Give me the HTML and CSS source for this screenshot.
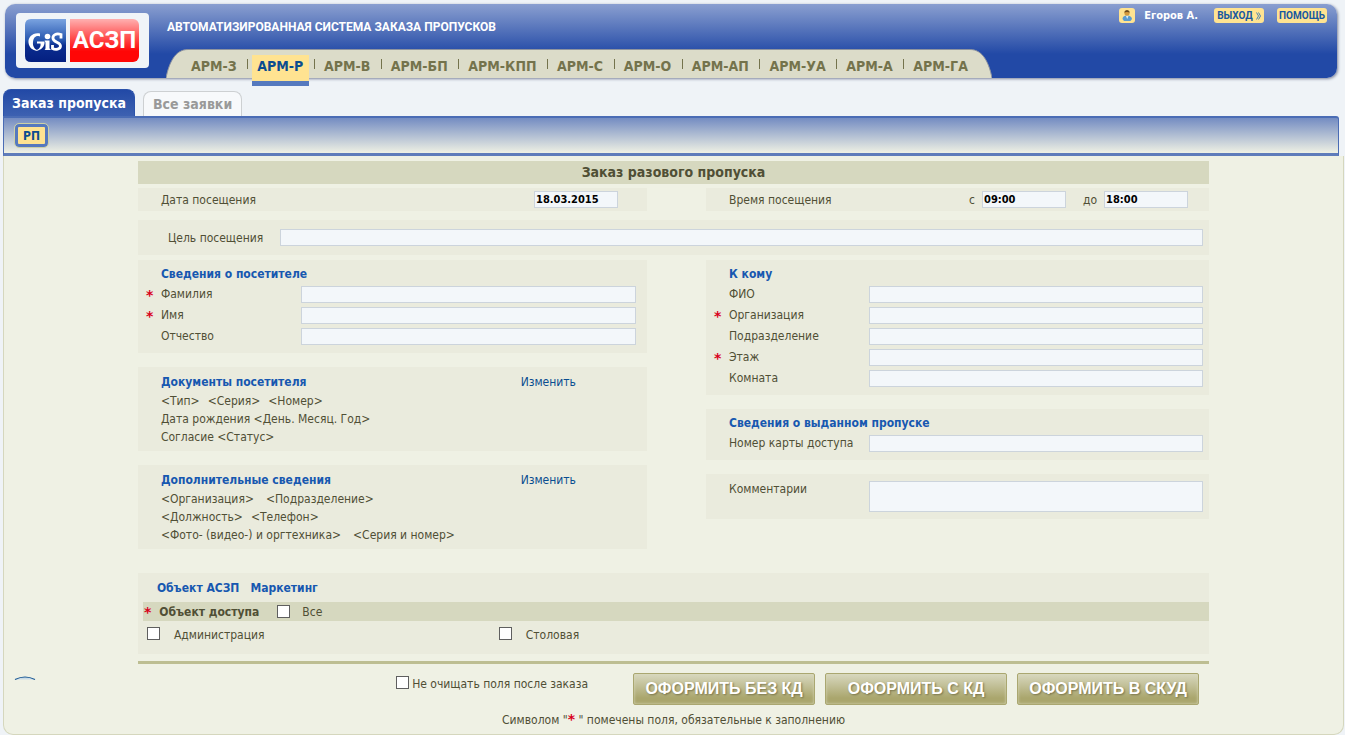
FILE: index.html
```html
<!DOCTYPE html>
<html lang="ru">
<head>
<meta charset="utf-8">
<title>АСЗП — Заказ разового пропуска</title>
<link rel="stylesheet" href="styles.css">
</head>
<body>
<header class="header">
  <div class="logo">
    <svg class="logo-mark" viewBox="0 0 41 43" role="img" aria-label="GiS">
      <defs><linearGradient id="gis" x1="0" y1="0" x2="0" y2="1"><stop offset="0" stop-color="#7aa3e0"/><stop offset=".5" stop-color="#2555ae"/><stop offset=".62" stop-color="#0b2d8f"/><stop offset="1" stop-color="#041f80"/></linearGradient></defs>
      <path d="M6 0H41V43H6Q0 43 0 37V6Q0 0 6 0Z" fill="url(#gis)"/>
      <path d="M15 14.500C8 13 3 18 3.500 23.500C4 29 8.500 32.500 14 31.500C9.500 31 7.500 27 8 23C8.500 18.500 11 16 15 17.500Z" fill="#fff"/>
      <path d="M12 22.500H19.500C20 27.500 16 32 10 31.500C14.500 30.500 16 27.500 15.500 24.500H12Z" fill="#fff"/>
      <circle cx="22.500" cy="17.500" r="2.800" fill="#fff"/>
      <path d="M19.500 21.500H24.500V29Q24.500 30.500 26.500 31H19.500Q20.500 30.500 20.500 29V23.500Z" fill="#fff"/>
      <path d="M36 19.500V15.500C31 14 27.500 16 28 19.500C28.500 23.500 35.500 23 35.500 27C35.500 30.500 30.500 31 27.500 29.500V26" fill="none" stroke="#fff" stroke-width="2.800"/>
    </svg>
    <span class="logo-name">АСЗП</span>
  </div>
  <div class="header-main">
    <div class="header-top">
      <h1 class="system-name">АВТОМАТИЗИРОВАННАЯ СИСТЕМА ЗАКАЗА ПРОПУСКОВ</h1>
      <div class="user">
        <svg class="user-icon" viewBox="0 0 16 15" aria-hidden="true"><rect width="16" height="15" rx="3" fill="#ffe391"/><path d="M3.500 11Q3.500 7.500 8 7.500T13 11L11.500 13H5Z" fill="#5b9bd0"/><path d="M7 8L8.200 11L9.500 8Z" fill="#d9eef8"/><circle cx="8" cy="5" r="2.600" fill="#d59a3c"/><path d="M5.200 4.500Q5.500 2 8 2T10.800 4.500L8 4Z" fill="#6b4b1d"/></svg>
        <span class="user-name">Егоров А.</span>
        <button class="pill" type="button">ВЫХОД<svg class="pill-arrow" viewBox="0 0 5 8" aria-hidden="true"><path d="M.500.500L2.500 4L.500 7.500M2.500.500L4.500 4L2.500 7.500" fill="none" stroke="#4a83b5"/></svg></button>
        <button class="pill" type="button">ПОМОЩЬ</button>
      </div>
    </div>
    <nav class="nav">
      <svg class="nav-edge" viewBox="0 0 22 29" aria-hidden="true"><path d="M0 29C3 14 9 .500 22 .500V29Z" fill="#dcdcc9"/><path d="M0 29C3 14 9 .500 22 .500" fill="none" stroke="#8f949f"/></svg>
      <ul class="nav-list">
        <li><a href="#">АРМ-З</a></li>
        <li><a class="current" href="#">АРМ-Р</a></li>
        <li><a href="#">АРМ-В</a></li>
        <li><a href="#">АРМ-БП</a></li>
        <li><a href="#">АРМ-КПП</a></li>
        <li><a href="#">АРМ-С</a></li>
        <li><a href="#">АРМ-О</a></li>
        <li><a href="#">АРМ-АП</a></li>
        <li><a href="#">АРМ-УА</a></li>
        <li><a href="#">АРМ-А</a></li>
        <li><a href="#">АРМ-ГА</a></li>
      </ul>
      <svg class="nav-edge" viewBox="0 0 22 29" aria-hidden="true"><path d="M22 29C19 14 13 .500 0 .500V29Z" fill="#dcdcc9"/><path d="M22 29C19 14 13 .500 0 .500" fill="none" stroke="#8f949f"/></svg>
    </nav>
  </div>
</header>

<div class="tabs">
  <a class="tab tab-active" href="#">Заказ пропуска</a>
  <a class="tab" href="#">Все заявки</a>
</div>
<div class="toolbar"><button class="tool" type="button">РП</button></div>

<main class="panel">
  <svg class="spinner" viewBox="0 0 22 4" aria-hidden="true"><path d="M1 3.500Q11-1.500 21 3.500Z" fill="#c9dbe6"/><path d="M1 3.500Q11-1.500 21 3.500" fill="none" stroke="#1c5a96" stroke-width="1.200"/></svg>
  <form class="form">
    <h2 class="form-title">Заказ разового пропуска</h2>
    <div class="columns">
      <div class="box when">
        <label for="date">Дата посещения</label>
        <input id="date" class="short" type="text" value="18.03.2015">
      </div>
      <div class="box when when-time">
        <span>Время посещения</span>
        <label class="from" for="from">с</label><input id="from" class="short" type="text" value="09:00">
        <label class="till" for="till">до</label><input id="till" class="short" type="text" value="18:00">
      </div>
    </div>
    <div class="box purpose">
      <label for="purpose">Цель посещения</label>
      <input id="purpose" type="text">
    </div>
    <div class="columns">
      <div class="stack">
        <section class="box fields">
          <h3>Сведения о посетителе</h3>
          <div class="field required"><label for="surname">Фамилия</label><input id="surname" type="text"></div>
          <div class="field required"><label for="name">Имя</label><input id="name" type="text"></div>
          <div class="field"><label for="patronymic">Отчество</label><input id="patronymic" type="text"></div>
        </section>
        <section class="box info">
          <div class="info-head"><h3>Документы посетителя</h3><a href="#">Изменить</a></div>
          <p><span>&lt;Тип&gt;</span><span>&lt;Серия&gt;</span><span>&lt;Номер&gt;</span></p>
          <p>Дата рождения &lt;День. Месяц. Год&gt;</p>
          <p>Согласие &lt;Статус&gt;</p>
        </section>
        <section class="box info">
          <div class="info-head"><h3>Дополнительные сведения</h3><a href="#">Изменить</a></div>
          <p class="wide"><span>&lt;Организация&gt;</span><span>&lt;Подразделение&gt;</span></p>
          <p><span>&lt;Должность&gt;</span><span>&lt;Телефон&gt;</span></p>
          <p class="wide"><span>&lt;Фото- (видео-) и оргтехника&gt;</span><span>&lt;Серия и номер&gt;</span></p>
        </section>
      </div>
      <div class="stack">
        <section class="box fields">
          <h3>К кому</h3>
          <div class="field"><label for="host">ФИО</label><input id="host" type="text"></div>
          <div class="field required"><label for="org">Организация</label><input id="org" type="text"></div>
          <div class="field"><label for="dept">Подразделение</label><input id="dept" type="text"></div>
          <div class="field required"><label for="floor">Этаж</label><input id="floor" type="text"></div>
          <div class="field"><label for="room">Комната</label><input id="room" type="text"></div>
        </section>
        <section class="box fields issued">
          <h3>Сведения о выданном пропуске</h3>
          <div class="field"><label for="card">Номер карты доступа</label><input id="card" type="text"></div>
        </section>
        <section class="box comments">
          <div class="field"><label for="comments">Комментарии</label><textarea id="comments"></textarea></div>
        </section>
      </div>
    </div>
    <section class="box objects">
      <h3>Объект АСЗП<span>Маркетинг</span></h3>
      <div class="access"><span class="star">*</span><b>Объект доступа</b><input id="all" type="checkbox"><label for="all">Все</label></div>
      <div class="places">
        <div><input id="adm" type="checkbox"><label for="adm">Администрация</label></div>
        <div><input id="canteen" type="checkbox"><label for="canteen">Столовая</label></div>
      </div>
    </section>
    <div class="actions">
      <div class="keep"><input id="keep" type="checkbox"><label for="keep">Не очищать поля после заказа</label></div>
      <button class="submit" type="button">ОФОРМИТЬ БЕЗ КД</button>
      <button class="submit" type="button">ОФОРМИТЬ С КД</button>
      <button class="submit" type="button">ОФОРМИТЬ В СКУД</button>
    </div>
    <p class="note">Символом "<span class="star">*</span> " помечены поля, обязательные к заполнению</p>
  </form>
</main>
</body>
</html>
```
FILE: styles.css
```css
* { box-sizing: border-box; }

body {
  display: flex;
  flex-direction: column;
  min-height: 100vh;
  margin: 0;
  background: #eff3f7;
  color: #504f35;
  font: 12px/16px "DejaVu Sans Condensed", sans-serif;
}

h1, h2, h3, p, ul { margin: 0; padding: 0; }
a { text-decoration: none; }
button, input, textarea { font: inherit; }
button { cursor: pointer; }

/* Header */
.header {
  display: flex;
  margin: 4px 8px 0 5px;
  border-radius: 10px;
  background: linear-gradient(#8a9fd0, #2249a6 50px);
  box-shadow: 1px 1px 3px #7d849c;
}

.logo {
  display: flex;
  gap: 4px;
  width: 133px;
  height: 55px;
  margin: 9px 0 0 11px;
  padding: 6px 10px 6px 9px;
  border-radius: 4px;
  background: #f0f4f8;
}

.logo-mark { flex: none; width: 41px; height: 43px; }

.logo-name {
  flex: 1;
  border-radius: 0 6px 6px 0;
  background: linear-gradient(#ffb0b0, #ff0606 75%);
  color: #fff;
  font: bold 24px/43px Roboto, sans-serif;
  text-align: center;
}

.header-main { flex: 1; margin-left: 17px; }

.header-top {
  display: flex;
  justify-content: space-between;
  height: 45px;
  padding: 4px 10px 0 1px;
}

.system-name {
  margin-top: 11px;
  color: #fff;
  font: bold 12px/16px Roboto, sans-serif;
}

.user { display: flex; align-items: flex-start; }
.user-icon { width: 16px; height: 15px; }

.user-name {
  margin: 0 16px 0 9px;
  color: #fff;
  font: bold 11px/16px "DejaVu Sans Condensed", sans-serif;
}

.pill {
  display: flex;
  align-items: center;
  justify-content: center;
  gap: 3px;
  width: 50px;
  height: 15px;
  padding: 0;
  border: 0;
  border-radius: 3px;
  background: #ffe391;
  color: #1758a0;
  font: bold 10px/15px Roboto, sans-serif;
}

.pill + .pill { margin-left: 13px; }
.pill-arrow { width: 5px; height: 8px; }

.nav { display: flex; height: 29px; }
.nav-edge { width: 22px; height: 29px; }

.nav-list {
  display: flex;
  justify-content: space-between;
  width: 782px;
  list-style: none;
  border-top: 1px solid #8f949f;
  background: #dcdcc9;
  font: bold 14px/22px "DejaVu Sans Condensed", sans-serif;
}

.nav-list li { display: flex; padding-top: 5px; }

.nav-list li + li::before {
  content: "";
  width: 1px;
  height: 10px;
  margin: 4px 4px 0;
  background: #74734c;
}

.nav-list a { height: 31px; padding: 0 6px 0 5px; color: #74734c; }
.nav-list li:first-child a { padding-left: 3px; }
.nav-list li:last-child a { padding-right: 2px; }
.nav-list .current { border-bottom: 5px solid #5679be; background: #ffe391; color: #0b4d90; }

/* Tabs */
.tabs {
  display: flex;
  align-items: flex-end;
  gap: 8px;
  margin: 11px 0 0 3px;
}

.tab {
  height: 25px;
  padding: 0 9px;
  border: 1px solid #cdd0d2;
  border-bottom: 0;
  border-radius: 8px 8px 0 0;
  background: #f7f9fb;
  color: #999;
  font: bold 14px/24px "DejaVu Sans Condensed", sans-serif;
}

.tab-active {
  height: 27px;
  padding: 0 8px;
  border-color: #2b52aa;
  background: linear-gradient(#2249a6, #3d61b1);
  color: #fff;
  line-height: 27px;
}

.toolbar {
  height: 40px;
  margin: 0 6px 0 3px;
  padding: 6px 11px;
  border: solid #4a6cb5;
  border-width: 2px 1px 3px;
  border-bottom-color: #5f7cba;
  border-radius: 0 3px 0 0;
  background: linear-gradient(#748cc2, #eff1e4);
}

.tool {
  display: block;
  width: 33px;
  height: 23px;
  padding: 0;
  border: 3px solid #5679be;
  border-radius: 4px;
  outline: 1px solid #cdd0a6;
  background: #ffe391;
  color: #0b4d90;
  font: bold 12px/16px "DejaVu Sans Condensed", sans-serif;
}

/* Form */
.panel {
  position: relative;
  flex: 1;
  margin: 0 1px 0 3px;
  border: 1px solid #d5d7bd;
  border-top: 0;
  border-radius: 0 0 10px 10px;
  background: #eff1e4;
}

.spinner { position: absolute; left: 10px; top: 520px; width: 22px; height: 4px; }

.form { width: 80%; margin: 0 auto; padding: 5px 0 4px; }

.form-title {
  margin-bottom: 4px;
  background: #d6d8bf;
  font: bold 14px/23px "DejaVu Sans Condensed", sans-serif;
  text-align: center;
}

.columns { display: grid; grid-template-columns: 509fr 503fr; gap: 59px; }
.stack { display: grid; align-content: start; gap: 14px; }
.box { background: #eaebdd; }

h3, b { font: bold 12px/18px "DejaVu Sans Condensed", sans-serif; }
h3 { color: #1758b0; }

input[type="text"], textarea {
  display: block;
  width: 100%;
  height: 17px;
  padding: 0 1px;
  border: 1px solid #ccd4dc;
  border-radius: 0;
  background: #f3f7fa;
  color: #000;
  font: bold 11px/15px "DejaVu Sans Condensed", sans-serif;
}

textarea { height: 31px; resize: none; }

input[type="checkbox"] {
  appearance: none;
  width: 13px;
  height: 13px;
  margin: 0;
  border: 1px solid #5f5f5f;
  background: #fff;
}

input[type="text"].short { width: 84px; }

.when {
  display: flex;
  align-items: center;
  justify-content: space-between;
  height: 23px;
  padding: 0 29px 0 23px;
}

.when-time { justify-content: flex-start; padding-right: 21px; }
.from { margin: 0 7px 0 auto; }
.till { margin: 0 7px 0 17px; }

.purpose {
  display: grid;
  grid-template-columns: 112px 1fr;
  align-items: center;
  height: 35px;
  margin: 9px 0 5px;
  padding: 0 6px 0 30px;
}

.fields { display: grid; gap: 4px; padding: 7px 6px 8px 23px; }
.fields h3 { line-height: 15px; }
.field { position: relative; display: grid; grid-template-columns: 140px 1fr; }
.columns .stack:first-child .fields { padding-right: 11px; }

.required::before {
  content: "*";
  position: absolute;
  left: -15px;
  top: 1px;
  color: #d9001b;
  font: bold 14px/16px "DejaVu Sans", sans-serif;
}

.info { padding: 6px 71px 5px 23px; line-height: 18px; }
.info-head { display: flex; justify-content: space-between; margin-bottom: 1px; }
.info a { color: #0b4d90; }
.info p { display: flex; gap: 8px; }
.info .wide { gap: 12px; }
.comments { padding: 7px 6px 7px 23px; }

.objects { height: 81px; margin-top: 24px; padding: 6px 0 0 5px; }
.objects h3 { padding-left: 14px; }
.objects h3 span { margin-left: 11px; }

.access {
  display: flex;
  align-items: center;
  height: 19px;
  margin: 5px 0 6px;
  background: #d6d8bf;
}

.star { color: #d9001b; font: bold 14px/16px "DejaVu Sans", sans-serif; }
.access .star { margin: 0 8px 0 1px; }
.access input { margin: 0 12px 0 18px; }
.places { display: grid; grid-template-columns: 33% 1fr; }
.places div { display: flex; gap: 14px; padding-left: 4px; }

.actions {
  display: flex;
  gap: 10px;
  justify-content: flex-end;
  margin-top: 7px;
  padding: 9px 10px 0 0;
  border-top: 3px solid #bdbe92;
}

.keep { display: flex; gap: 3px; margin: 3px 35px 0 0; }

.submit {
  width: 182px;
  height: 32px;
  padding: 0;
  border: 1px solid #aaa770;
  border-radius: 2px;
  background: linear-gradient(#d8d8bf, #aaa66d 80%);
  box-shadow: inset 0 0 3px #d8d8b8;
  color: #fff;
  font: bold 16px/30px "Liberation Sans", sans-serif;
  text-shadow: 1px 1px 2px #77734a;
}

.note { margin-top: 6px; text-align: center; }
```
